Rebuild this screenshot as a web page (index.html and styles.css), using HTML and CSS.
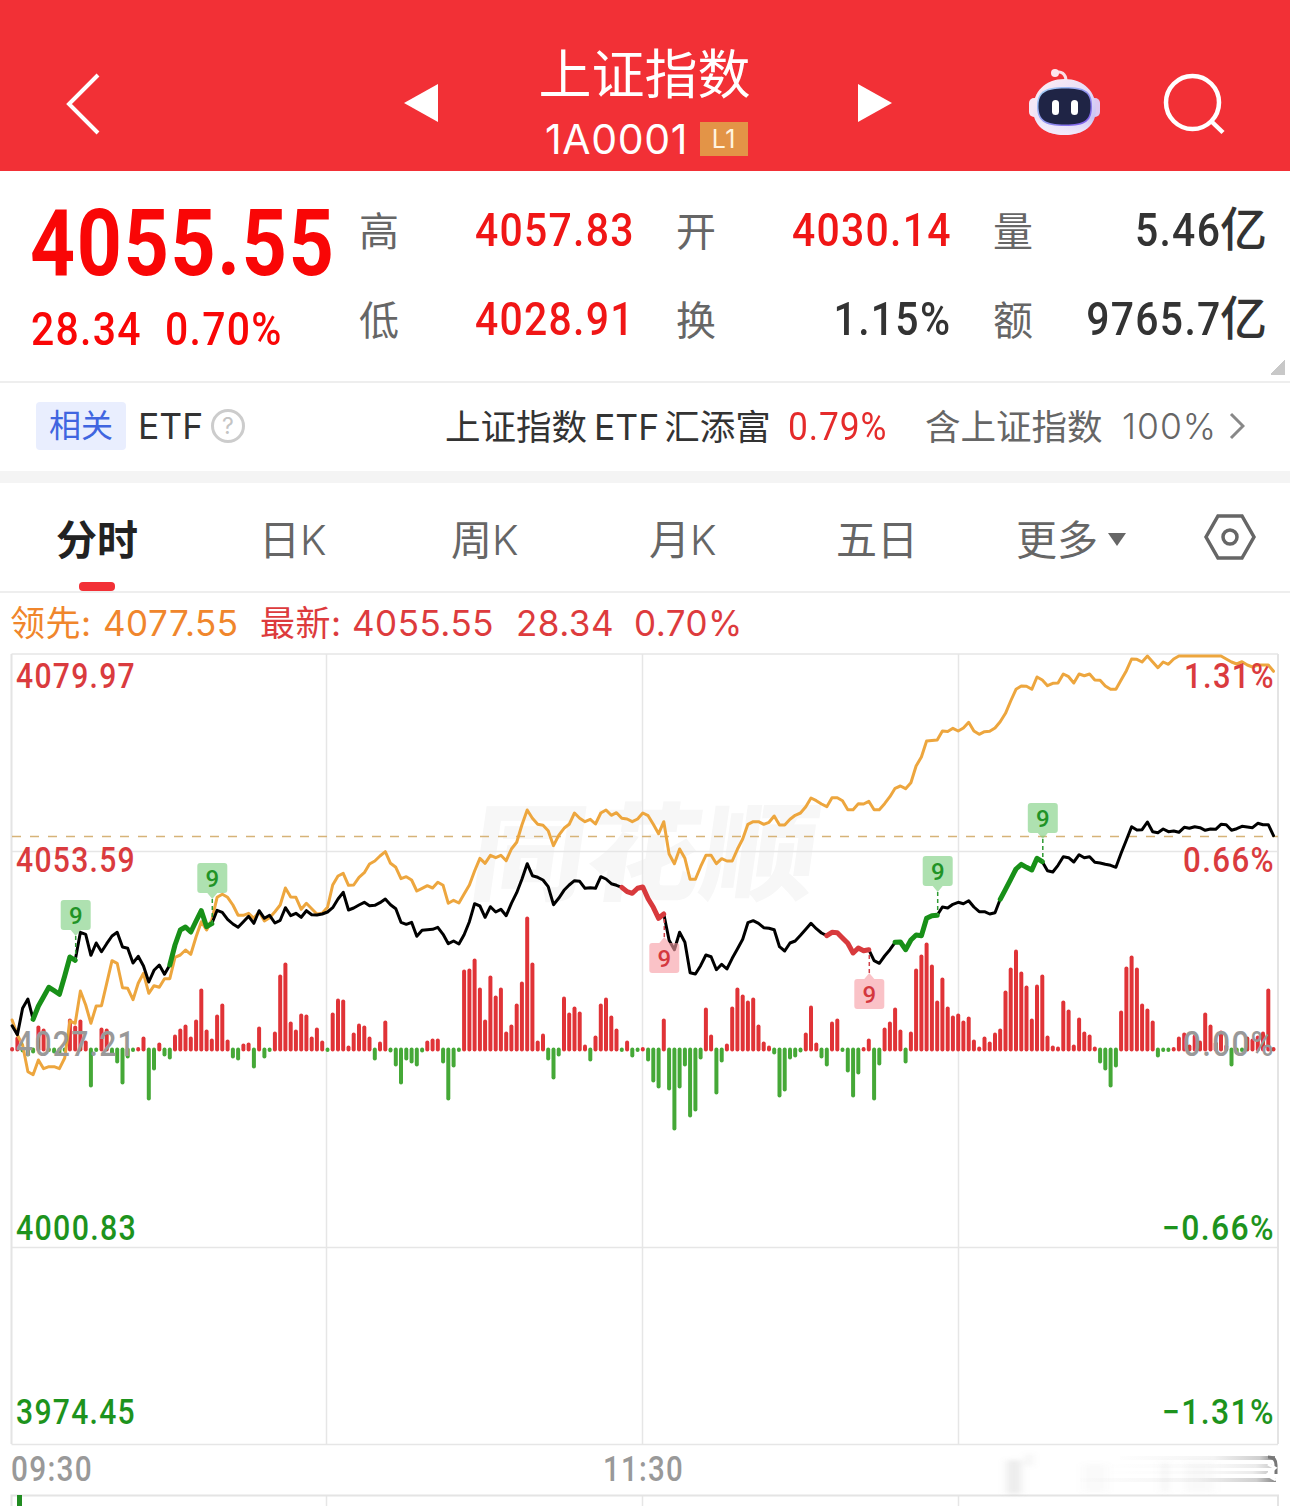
FILE: index.html
```html
<!DOCTYPE html>
<html lang="zh-CN">
<head>
  <meta charset="UTF-8">
  <meta name="viewport" content="width=device-width, initial-scale=1.0">
  <title>上证指数 1A0001</title>
  <link rel="stylesheet" href="styles.css">
</head>
<body>

  <header class="topbar">
    <svg class="back" width="36" height="62" viewBox="0 0 36 62"><path d="M33 2 4 31 33 60"/></svg>
    <svg class="prev" width="34" height="40" viewBox="0 0 34 40"><path d="M0 20 34 1V39z"/></svg>
    <div class="title">
      <h1>上证指数</h1>
      <div class="code"><span>1A0001</span><span class="level">L1</span></div>
    </div>
    <svg class="next" width="34" height="40" viewBox="0 0 34 40"><path d="M34 20 0 1V39z"/></svg>
    <svg class="robot" width="74" height="68" viewBox="0 0 74 68">
      <defs>
        <linearGradient id="shell" x1="0" y1="0" x2="1" y2="1">
          <stop offset="0" stop-color="#fff0f4"/>
          <stop offset=".55" stop-color="#e6dcf8"/>
          <stop offset="1" stop-color="#b9b4f2"/>
        </linearGradient>
        <linearGradient id="rim" x1="0" y1="0" x2="1" y2="1">
          <stop offset="0" stop-color="#a9dcf8"/>
          <stop offset="1" stop-color="#7a52e8"/>
        </linearGradient>
        <linearGradient id="chin" x1="0" y1="0" x2="0" y2="1">
          <stop offset=".7" stop-color="#fff" stop-opacity="0"/>
          <stop offset="1" stop-color="#f4e9fa"/>
        </linearGradient>
      </defs>
      <path d="M27 5C33 2 38 6 38 13" fill="none" stroke="#fbdde6" stroke-width="3"/>
      <circle cx="27" cy="5" r="4" fill="#fde6ee"/>
      <rect x="1" y="30" width="12" height="19" rx="5" fill="#f5e7f5"/>
      <rect x="60" y="30" width="12" height="19" rx="5" fill="#dcc8f2"/>
      <path d="M36.500 11C56 11 68 24 68 41 68 58 55 67 36.500 67S5 58 5 41C5 24 17 11 36.500 11z" fill="url(#shell)"/>
      <path d="M36.500 11C56 11 68 24 68 41 68 58 55 67 36.500 67S5 58 5 41C5 24 17 11 36.500 11z" fill="url(#chin)"/>
      <path d="M37 19C58 19 64 24 64 38 64 53 58 58 37 58S9 53 9 38C9 24 16 19 37 19z" fill="url(#rim)"/>
      <path d="M37 20.500C57 20.500 62.500 25 62.500 38 62.500 52 57 56.500 37 56.500S10.500 52 10.500 38C10.500 25 17 20.500 37 20.500z" fill="#1f2445"/>
      <rect x="24" y="32" width="7" height="15" rx="3.5" fill="#fff"/>
      <rect x="43" y="32" width="7" height="15" rx="3.5" fill="#fff"/>
    </svg>
    <svg class="search" width="64" height="64" viewBox="0 0 64 64"><circle cx="29.500" cy="29.500" r="26.500"/><path d="M48 48 60 59.500"/></svg>
  </header>

  <section class="quote">
    <div class="main">
      <div class="price"><span class="num">4055.55</span></div>
      <div class="change"><span class="num">28.34</span><span class="num">0.70%</span></div>
    </div>
    <dl class="stats">
      <div><dt>高</dt><dd class="up"><span class="num">4057.83</span></dd></div>
      <div><dt>开</dt><dd class="up"><span class="num">4030.14</span></dd></div>
      <div><dt>量</dt><dd><span class="num">5.46</span>亿</dd></div>
      <div><dt>低</dt><dd class="up"><span class="num">4028.91</span></dd></div>
      <div><dt>换</dt><dd><span class="num">1.15%</span></dd></div>
      <div><dt>额</dt><dd><span class="num">9765.7</span>亿</dd></div>
    </dl>
    <i class="corner"></i>
  </section>

  <section class="related">
    <span class="tag">相关</span>
    <span class="etf">ETF</span>
    <span class="help">?</span>
    <span class="fund">上证指数<b>ETF</b>汇添富</span>
    <span class="fund-rate"><span class="num">0.79%</span></span>
    <span class="holding">含上证指数</span>
    <span class="percent">100%</span>
    <svg class="more" width="16" height="28" viewBox="0 0 16 28"><path d="M2 2 14 14 2 26"/></svg>
  </section>

  <nav class="tabs">
    <a class="active">分时</a>
    <a>日<b>K</b></a>
    <a>周<b>K</b></a>
    <a>月<b>K</b></a>
    <a>五日</a>
    <a>更多<i class="caret"></i></a>
    <svg width="52" height="46" viewBox="0 0 52 46"><path d="M14 2H38L50 23 38 44H14L2 23z"/><circle cx="26" cy="23" r="7"/></svg>
  </nav>

  <div class="legend">
    <span class="lead">领先:</span><span class="lead lead-value">4077.55</span>
    <span>最新:</span><span class="last">4055.55</span><span class="diff">28.34</span><span>0.70%</span>
  </div>

  <svg class="chart" id="chart" width="1290" height="856" viewBox="0 650 1290 856">
    <defs>
      <linearGradient id="fade" x1="0" x2="1">
        <stop offset="0" stop-color="#777" stop-opacity=".01"/>
        <stop offset=".6" stop-color="#777" stop-opacity=".08"/>
        <stop offset=".9" stop-color="#777" stop-opacity=".35"/>
        <stop offset="1" stop-color="#666" stop-opacity=".8"/>
      </linearGradient>
      <filter id="soft" x="-20%" y="-50%" width="140%" height="200%"><feGaussianBlur stdDeviation="4 2"/></filter>
    </defs>
    <text class="watermark" x="592" y="892" textLength="346" lengthAdjust="spacingAndGlyphs">同花顺</text>
    <path class="grid" d="M11.500 654H1278M11.500 851.500H1278M11.500 1247.500H1278M11.500 1444.500H1278M326.500 654V1444M642.500 654V1444M958.500 654V1444M326.500 1496V1506M642.500 1496V1506M958.500 1496V1506"/>
    <path class="frame" d="M11.500 1444V654M1278 654V1444M11.500 1506V1495.500H1278V1506"/>
    <path class="volume" d="M19.500 1495V1506"/>
    <path class="now" d="M12 836.500H1278"/>
    <g id="bars"></g>
    <g id="lines"></g>
    <g id="marks"></g>
    <g class="labels">
      <text class="up" x="16" y="688" textLength="120" lengthAdjust="spacingAndGlyphs">4079.97</text>
      <text class="up" x="16" y="872" textLength="120" lengthAdjust="spacingAndGlyphs">4053.59</text>
      <text class="flat" x="16" y="1056" textLength="120" lengthAdjust="spacingAndGlyphs">4027.21</text>
      <text class="down" x="16" y="1240" textLength="121" lengthAdjust="spacingAndGlyphs">4000.83</text>
      <text class="down" x="16" y="1424" textLength="120" lengthAdjust="spacingAndGlyphs">3974.45</text>
      <text class="up" x="1184" y="688" textLength="91" lengthAdjust="spacingAndGlyphs">1.31%</text>
      <text class="up" x="1183" y="872" textLength="92" lengthAdjust="spacingAndGlyphs">0.66%</text>
      <text class="flat" x="1183" y="1056" textLength="92" lengthAdjust="spacingAndGlyphs">0.00%</text>
      <text class="down" x="1162" y="1240" textLength="113" lengthAdjust="spacingAndGlyphs">−0.66%</text>
      <text class="down" x="1162" y="1424" textLength="113" lengthAdjust="spacingAndGlyphs">−1.31%</text>
      <text class="flat" x="11" y="1481" textLength="82" lengthAdjust="spacingAndGlyphs">09:30</text>
      <text class="flat" x="603" y="1481" textLength="81" lengthAdjust="spacingAndGlyphs">11:30</text>
    </g>
    <g filter="url(#soft)">
      <rect x="1007" y="1460" width="14" height="34" fill="#999" opacity=".2"/>
      <rect x="1027" y="1454" width="4" height="12" fill="#999" opacity=".2"/>
      <rect x="1083" y="1464" width="24" height="28" fill="#999" opacity=".05"/>
      <rect x="1162" y="1462" width="6" height="30" fill="#999" opacity=".12"/>
      <rect x="1185" y="1462" width="28" height="30" fill="#999" opacity=".06"/>
    </g>
    <g fill="url(#fade)">
      <rect x="1120" y="1456" width="155" height="4"/>
      <rect x="1110" y="1464" width="162" height="4" opacity=".4"/>
      <rect x="1110" y="1471" width="158" height="3" opacity=".4"/>
      <rect x="1080" y="1478" width="196" height="4"/>
    </g>
    <path class="smudge" d="M1268 1457Q1276 1457 1276 1465V1474"/>
    <path class="smudge-light" d="M1268 1464 1275 1468 1267 1475 1276 1480M1268 1484H1277M1270 1489H1278"/>
  </svg>

  <script src="chart.js"></script>
</body>
</html>
```
FILE: styles.css
```css
* {
  box-sizing: border-box;
}
body {
  margin: 0;
  width: 1290px;
  height: 1506px;
  overflow: hidden;
  background: #fff;
  color: #333;
  font-family: Inter, "Noto Sans CJK SC", sans-serif;
}
svg {
  display: block;
  flex: none;
}
h1, dl, dd {
  margin: 0;
}

/* header */
.topbar {
  display: flex;
  height: 171px;
  background: #f23036;
  padding-left: 65px;
}
.topbar > svg {
  fill: #fff;
}
.topbar .back {
  margin-top: 73px;
  fill: none;
  stroke: #fff;
  stroke-width: 4;
}
.topbar .prev {
  margin: 83px 0 0 303px;
}
.title {
  width: 420px;
  padding: 41px 7px 0 0;
  text-align: center;
  color: #fff;
}
.title h1 {
  font: 400 53px/60px "Noto Sans CJK SC", sans-serif;
}
.code {
  display: flex;
  align-items: center;
  justify-content: center;
  height: 76px;
  margin-left: 4px;
  font-size: 41px;
}
.code span {
  white-space: nowrap;
  letter-spacing: .6px;
}
.code .level {
  width: 48px;
  height: 34px;
  margin-left: 12px;
  background: #e39447;
  color: #fff4e0;
  font-size: 25px;
  line-height: 34px;
}
.topbar .next {
  margin-top: 83px;
}
.topbar .robot {
  margin: 68px 0 0 136px;
}
.topbar .search {
  margin: 73px 0 0 61px;
  fill: none;
  stroke: #fff;
  stroke-width: 4.5;
}

/* quote */
.quote {
  position: relative;
  display: flex;
  height: 212px;
  padding-left: 30px;
  border-bottom: 2px solid #eee;
}
.main {
  width: 329px;
  color: #f90606;
}
.num {
  display: inline-block;
  font-family: Roboto, sans-serif;
  letter-spacing: 1.5px;
  margin-right: -1.5px;
  transform: scaleX(.87);
  transform-origin: right;
}
.price {
  height: 110px;
  padding-top: 15px;
  font-size: 93px;
  line-height: 110px;
  font-weight: 700;
}
.price .num,
.change .num {
  transform-origin: left;
}
.price .num {
  letter-spacing: 2px;
  transform: scaleX(.846);
}
.change {
  display: flex;
  gap: 8px;
  padding: 17px 0 0 1px;
  font-size: 47px;
  line-height: 62px;
  font-weight: 500;
}
.stats {
  display: grid;
  grid-template-columns: repeat(3, 274px);
  grid-template-rows: 89px 89px;
  column-gap: 43px;
  padding-top: 13px;
}
.stats div {
  display: flex;
  align-items: center;
  justify-content: space-between;
}
.stats dt {
  font: 400 40px/60px "Noto Sans CJK SC", sans-serif;
  color: #666;
}
.stats dd {
  padding-bottom: 2px;
  font: 500 47px/60px "Noto Sans CJK SC", sans-serif;
  white-space: nowrap;
}
.stats .up {
  color: #f01616;
}
.corner {
  position: absolute;
  right: 5px;
  bottom: 6px;
  width: 15px;
  height: 15px;
  background: linear-gradient(135deg, transparent 50%, #c8c8c8 50%);
}

/* related fund */
.related {
  display: flex;
  align-items: center;
  height: 100px;
  padding-left: 36px;
  border-bottom: 12px solid #f4f4f4;
  font-size: 35.5px;
  white-space: nowrap;
}
.tag {
  width: 90px;
  height: 48px;
  margin-bottom: 2px;
  border-radius: 4px;
  background: #e9eefe;
  color: #4065e0;
  font-size: 32px;
  line-height: 48px;
  text-align: center;
}
.etf {
  width: 74px;
  padding: 0 0 2px 12px;
}
.help {
  width: 34px;
  height: 34px;
  margin: 0 0 2px 11px;
  border: 3px solid #ccc;
  border-radius: 50%;
  color: #c4c4c4;
  font-size: 23px;
  line-height: 28px;
  text-align: center;
}
.fund {
  width: 343px;
  margin-left: 200px;
  padding-bottom: 5px;
}
.fund b {
  padding: 0 5px 0 7px;
  font-weight: 400;
}
.fund-rate {
  width: 137px;
  padding-bottom: 1px;
  color: #e52b2b;
  font: 400 38px Roboto, sans-serif;
}
.fund-rate .num {
  letter-spacing: 1px;
  transform: scaleX(.93);
  transform-origin: left;
}
.holding {
  width: 197px;
  padding-bottom: 5px;
  color: #666;
}
.percent {
  width: 107px;
  padding-bottom: 2px;
  color: #666;
  font-weight: 300;
  letter-spacing: 1px;
}
.more {
  margin-bottom: 2px;
  fill: none;
  stroke: #888;
  stroke-width: 3;
}

/* tabs */
.tabs {
  display: grid;
  grid-template-columns: 203px 192px 198px 187px 180px 188px auto;
  align-items: center;
  height: 110px;
  padding-left: 56px;
  border-bottom: 2px solid #eee;
  color: #666;
  font: 400 41px/104px "Noto Sans CJK SC", sans-serif;
}
.tabs b {
  font: 300 41px Inter, sans-serif;
}
.tabs .active {
  position: relative;
  color: #222;
  font-weight: 700;
}
.tabs .active::after {
  content: "";
  position: absolute;
  left: 23px;
  bottom: -2px;
  width: 36px;
  height: 9px;
  border-radius: 4px;
  background: #f23036;
}
.caret {
  display: inline-block;
  margin: 0 0 9px 10px;
  border: solid transparent;
  border-width: 13px 9px 0;
  border-top-color: #666;
}
.tabs svg {
  fill: none;
  stroke: #666;
  stroke-width: 3.5;
}

/* legend */
.legend {
  display: flex;
  height: 57px;
  padding-left: 10px;
  color: #dd3b3d;
  font-size: 35px;
  line-height: 61px;
  letter-spacing: .5px;
  white-space: nowrap;
}
.lead {
  width: 93px;
  color: #f0862c;
}
.lead.lead-value {
  width: 157px;
}
.legend span:nth-child(3) {
  width: 92px;
}
.last {
  width: 164px;
}
.diff {
  width: 118px;
}

/* chart */
.chart .grid,
.chart .frame,
.chart polyline,
.chart .smudge,
.chart .smudge-light {
  fill: none;
}
.watermark {
  font: 900 106px "Noto Sans CJK SC", sans-serif;
  fill: #f7f7f7;
  transform: skewX(-8deg);
}
.grid {
  stroke: #e6e6e6;
  stroke-width: 1.5;
}
.frame {
  stroke: #e4e4e4;
  stroke-width: 2;
}
.volume {
  stroke: #218c21;
  stroke-width: 5;
}
.now {
  stroke: #d6b378;
  stroke-width: 1.5;
  stroke-dasharray: 9 9;
}
.bar {
  stroke-width: 4;
  stroke-linecap: round;
}
.bar.rise {
  stroke: #e03337;
}
.bar.fall {
  stroke: #45a837;
}
.line {
  stroke-width: 3;
  stroke-linejoin: round;
  stroke-linecap: round;
}
.line.lead-line {
  stroke: #eda63e;
}
.line.price-line {
  stroke: #000;
}
.line.buy {
  stroke: #189018;
  stroke-width: 5;
}
.line.sell {
  stroke: #d83a3d;
  stroke-width: 5;
}
.mark-box {
  fill: #7cce80;
  opacity: .62;
}
.mark-box.sell {
  fill: #f79da5;
}
.mark-stem {
  stroke: #2f9a33;
  stroke-width: 1.5;
  stroke-dasharray: 4 3;
}
.mark-stem.sell {
  stroke: #cf4048;
}
.mark-text {
  font: 500 24px Roboto, sans-serif;
  fill: #219326;
  text-anchor: middle;
}
.mark-text.sell {
  fill: #d4383e;
}
.labels text {
  font: 500 35px Roboto, sans-serif;
  letter-spacing: 1.5px;
}
.labels .up {
  fill: #da3b3e;
}
.labels .down {
  fill: #1d931d;
}
.labels .flat {
  fill: #999;
}
.smudge {
  stroke: #777;
  stroke-width: 3;
}
.smudge-light {
  stroke: #fff;
  stroke-width: 3;
}
```
FILE: chart.js
```js
// one value per minute, 09:30 - 15:00
const price = [
  1025.7, 1034.7, 1008.3, 999, 1019.3, 1006, 996.7, 987.3, 990.7, 994.3, 976, 957, 960.3, 932.3, 934.3, 955.3, 943, 951.7, 943.7, 936,
  932.3, 947, 948.3, 963, 956.3, 966, 982, 970.3, 965, 974.3, 965, 945, 930, 927, 932, 921, 910.7, 926.7, 923.7, 910.3,
  912.3, 919.3, 924, 927.3, 921.7, 916.3, 923.3, 910.7, 918.3, 915.3, 923, 920.3, 907.7, 915.7, 913.3, 917.3, 910.7, 914.7, 915, 914,
  912, 907.7, 899, 892.3, 910, 908, 905, 902.3, 905.7, 905.3, 902.7, 899, 904.7, 908.7, 922.3, 924.3, 922.3, 936.3, 930.3, 929.7,
  929.3, 927.3, 934.3, 943.7, 941, 944, 934.7, 921.7, 903.7, 906, 917.3, 906.7, 912, 909.3, 915.7, 903.3, 892.7, 879.3, 863.7, 875.7,
  877.3, 880, 886.7, 904.7, 898.3, 890.3, 885, 880.7, 881.3, 888.3, 887.7, 888.3, 876.7, 879, 883.7, 885.3, 887.3, 891.7, 893.3, 888.3,
  887, 898.7, 907.3, 918.3, 914, 940.3, 949.7, 932.3, 942.3, 972.7, 974, 965.7, 955, 956.7, 969.7, 964.3, 969, 958.3, 949, 939.3,
  922.7, 920.7, 923.3, 927.7, 928.3, 929.7, 946.7, 951, 943, 941, 935.3, 929.3, 923.3, 928.7, 933, 935.7, 932.3, 932.7, 938, 943.3,
  953, 948, 950.7, 949.7, 960.7, 963.3, 956, 949.7, 942.3, 942, 949.7, 940, 935, 935.7, 918.3, 915.7, 915.3, 907, 908, 904.3,
  902.3, 903.7, 900.7, 907, 911.7, 911.7, 914, 912.7, 899.3, 889.3, 879.3, 869, 864.3, 867.3, 870, 858.3, 861.7, 870.7, 872, 865.3,
  856.7, 857.7, 862, 854.7, 857.7, 856.7, 862.3, 863, 864.3, 865.3, 867.3, 853.3, 840, 826.7, 830, 829.7, 822, 831.7, 832.7, 829,
  831.7, 831, 832.3, 827.3, 828.3, 826.7, 827.7, 830.3, 829, 829.3, 824.3, 824.7, 830.3, 828.7, 826.3, 827, 827.7, 823.3, 824.7, 824.7,
  835.7
];

const lead = [
  1020, 1035, 1045, 1071.7, 1074.7, 1060, 1068.7, 1066.7, 1066.7, 1068.7, 1058, 1021, 1023.3, 991, 1005, 1023.3, 1006, 1005.7, 983.3, 960.7,
  963.3, 987.7, 988.3, 999.7, 983.3, 973.3, 993.3, 985.7, 987.3, 978.7, 978.7, 957.3, 955, 950, 954.3, 936.7, 921.7, 930, 920, 897.3,
  894.3, 897.3, 905, 915.3, 915.3, 913.3, 918.3, 911.7, 921, 917.7, 911.7, 905, 888, 897, 897.3, 909.3, 903.3, 908.7, 914, 913.3,
  907.3, 885, 876, 873.3, 885.3, 885, 877.3, 872.7, 864, 861, 856, 851.7, 863.3, 867.3, 878.7, 876.7, 880, 891, 888.3, 885.7,
  888, 882.3, 885.3, 903.3, 900.3, 903, 894, 885, 871, 858.3, 863.3, 855.3, 857.7, 855.3, 860.7, 849, 842.3, 825, 810, 818.3,
  824.3, 825.3, 830.7, 845.7, 835.3, 828.3, 824.3, 813, 818.3, 821.7, 819.3, 824, 813, 810, 815.3, 812.7, 818.3, 819, 821.7, 819,
  813, 815.7, 824.3, 833.7, 821.7, 854, 863.7, 849, 858.3, 879.3, 879.3, 866.7, 855.3, 855.3, 863.7, 858.7, 861, 861, 849.3, 839,
  824.3, 821.7, 821.7, 824.3, 822.3, 816, 825, 825, 819.3, 815.3, 813, 806.7, 798, 800.7, 804, 806.7, 797.7, 797.7, 800.7, 809.7,
  809.7, 803.7, 804, 801.3, 809.7, 809.7, 803.7, 796.7, 788.3, 786, 788.7, 782.7, 766, 757, 741, 740.5, 740, 731, 731.5, 728.3,
  731, 728, 722.3, 731, 734.3, 731.7, 731.3, 728, 721.7, 713.3, 701, 689.3, 686, 686.3, 689.3, 677, 680, 685.7, 683.3, 683,
  674, 676.7, 683, 674, 675.7, 674, 680, 680.3, 686, 689.3, 689.3, 680, 670.7, 659, 659.3, 662, 656, 662, 667.7, 662,
  664.3, 659, 656, 656, 656, 656, 656, 656, 656, 656, 656, 659, 662, 664, 661.7, 665, 667, 665, 665, 665,
  671.3
];

// momentum bars: positive rises above the zero line, negative hangs below
const force = [
  1, 13, -3, -7, -4, 24, 21, -1, -4, -6, -1, 31, 24, 30, 9, -38, -1, 22, 21, -6,
  -14, -35, -9, -2, 1, 13, -51, -21, 7, -7, -10, 15, 21, 25, 13, 30, 61, 20, 11, 35,
  46, 10, -9, -11, 6, 7, -19, 23, -9, -2, 18, 75, 87, 28, 20, 36, 35, 13, 22, 9,
  -2, 37, 51, 50, 4, 17, 26, 24, 13, -11, 8, 29, -3, -17, -35, -11, -14, -17, -3, 9,
  11, 11, -14, -51, -18, -1, 80, 81, 91, 62, 30, 74, 54, 62, 18, 25, 46, 68, 133, 87,
  9, 16, -11, -30, -7, 53, 37, 43, 38, 5, -12, 14, 46, 52, 34, 21, -2, 9, -8, -2,
  1, -12, -33, -39, 31, -41, -81, -39, -17, -68, -62, -10, 42, 15, -45, -13, 6, 43, 62, 55,
  49, 52, 25, 8, 4, -5, -48, -42, -10, -8, -3, 17, 44, 7, -9, -17, 28, 31, -2, -23,
  -48, -25, 1, 11, -51, -16, 22, 28, 42, 20, -14, 18, 81, 95, 107, 85, 49, 72, 43, 34,
  36, 29, 33, 10, 3, 13, 8, 17, 21, 59, 82, 100, 78, 64, 31, 65, 75, 14, 4, 3,
  49, 40, 5, 32, 18, 15, 3, -14, -21, -38, -18, 39, 83, 94, 82, 46, 41, 29, -8, -2,
  -2, 1, 13, 17, 5, 15, 9, 37, 25, 8, 19, 5, -17, -5, -2, 13, 11, 14, 18, 61,
  1
];

const zero = 1049.5;
const x = i => +(12.1 + i * 5.256).toFixed(1);

function add(parent, tag, attrs, text) {
  const el = document.createElementNS('http://www.w3.org/2000/svg', tag);
  for (const key in attrs) el.setAttribute(key, attrs[key]);
  if (text) el.textContent = text;
  document.getElementById(parent).appendChild(el);
}

function line(data, from, to, cls) {
  const points = data.slice(from, to + 1).map((y, i) => x(from + i) + ',' + y).join(' ');
  add('lines', 'polyline', { class: 'line ' + cls, points });
}

force.forEach((v, i) => {
  const up = v > 0;
  // very short bars shrink to a dot on the zero line
  const end = up ? Math.min(zero - v + 2, zero - 0.5) : Math.max(zero - v - 2, zero + 0.5);
  add('bars', 'line', {
    class: 'bar ' + (up ? 'rise' : 'fall'),
    x1: x(i), x2: x(i), y1: zero, y2: end
  });
});

line(lead, 0, 240, 'lead-line');
line(price, 0, 240, 'price-line');
[[4, 12], [30, 38], [168, 176], [188, 196]].forEach(s => line(price, s[0], s[1], 'buy'));
[[116, 124], [155, 163]].forEach(s => line(price, s[0], s[1], 'sell'));

function mark(i, top, cls) {
  const cx = x(i) + 0.5;
  const sell = cls === 'sell';
  const tip = sell ? `m-10 0l-5 -6l-5 6` : '';
  const foot = sell ? 'h-24' : 'h-7l-5 6l-5 -6h-7';
  const head = sell ? 'h7l5 -6l5 6h7' : 'h24';
  const d = `M${cx - 12} ${top}${head}q3 0 3 3v24q0 3 -3 3${foot}q-3 0 -3 -3v-24q0 -3 3 -3z`;
  add('marks', 'path', { class: 'mark-box ' + cls, d });
  add('marks', 'line', { class: 'mark-stem ' + cls, x1: cx, x2: cx, y1: sell ? top - 6 : top + 36, y2: price[i] });
  add('marks', 'text', { class: 'mark-text ' + cls, x: cx, y: top + 24 }, '9');
}

mark(12, 900, 'buy');
mark(38, 863, 'buy');
mark(176, 856, 'buy');
mark(196, 803, 'buy');
mark(124, 943, 'sell');
mark(163, 979, 'sell');
```
